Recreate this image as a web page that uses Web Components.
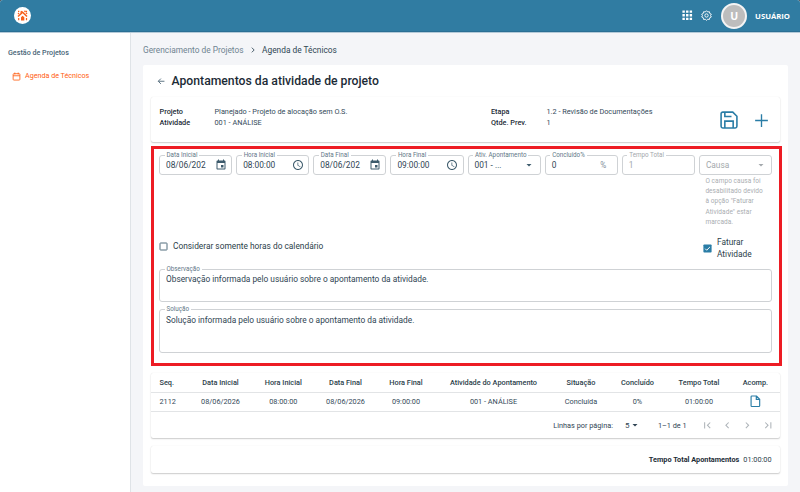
<!DOCTYPE html>
<html lang="pt-BR">
<head>
<meta charset="utf-8">
<title>Agenda de Técnicos</title>
<style>
html, body{
    margin: 0;
    height: 100%;
}
body{
    background: #4a4f54;
    font-family: Roboto, "Liberation Sans", sans-serif;
    font-size: 7.3px;
    color: #2b3e4a;
    overflow: hidden;
}
</style>
</head>
<body>
<app-shell>
    <app-header slot="header" user="USUÁRIO" initial="U"></app-header>
    <side-menu slot="menu" heading="Gestão de Projetos" item="Agenda de Técnicos"></side-menu>
    <bread-crumb slot="path" parent="Gerenciamento de Projetos" current="Agenda de Técnicos"></bread-crumb>
    <page-title>Apontamentos da atividade de projeto</page-title>
    <activity-summary></activity-summary>
    <entry-form></entry-form>
    <entry-table></entry-table>
    <total-card label="Tempo Total Apontamentos" value="01:00:00"></total-card>
</app-shell>

<script>
const icons = {
    apps: '<path fill="currentColor" d="M4 8h4V4H4zm6 12h4v-4h-4zm-6 0h4v-4H4zm0-6h4v-4H4zm6 0h4v-4h-4zm6-10v4h4V4zm-6 4h4V4h-4zm6 6h4v-4h-4zm0 6h4v-4h-4z"/>',
    gear: '<path d="M12 1.5l2.6 2.8 3.8-.5.7 3.8 3.4 1.6-1.7 2.8 1.7 3.3-3.4 1.5-.7 3.8-3.8-.4L12 22.5l-2.6-2.3-3.8.4-.7-3.8L1.5 15.3 3.2 12 1.5 9.2l3.4-1.6.7-3.8 3.8.5z"/><circle cx="12" cy="12" r="3.6"/>',
    calendar: '<rect x="3" y="4.5" width="18" height="17" rx="2"/><path d="M3 10h18M7.5 1.5v5M16.5 1.5v5"/>',
    event: '<path fill="currentColor" stroke="none" d="M17 12h-5v5h5zM16 1v2H8V1H6v2H5c-1.11 0-1.99.9-1.99 2L3 19c0 1.1.89 2 2 2h14c1.1 0 2-.9 2-2V5c0-1.1-.9-2-2-2h-1V1zm3 18H5V8h14z"/>',
    clock: '<path fill="currentColor" stroke="none" d="M11.99 2C6.47 2 2 6.48 2 12s4.47 10 9.99 10C17.52 22 22 17.52 22 12S17.52 2 11.99 2M12 20c-4.42 0-8-3.58-8-8s3.58-8 8-8 8 3.58 8 8-3.58 8-8 8m.5-13H11v6l5.25 3.15.75-1.23-4.5-2.67z"/>',
    arrow: '<path fill="currentColor" stroke="none" d="m7 10 5 5 5-5z"/>',
    back: '<path d="M21 12H4M11 4.5L3.5 12l7.5 7.5"/>',
    chevron: '<path d="M8.5 5l7 7-7 7"/>',
    save: '<path d="M4.5 2.5h12l5 5v12a2 2 0 0 1-2 2h-15a2 2 0 0 1-2-2v-15a2 2 0 0 1 2-2zM7 21.5v-8.2h10v8.2M7 2.5v5.3h8"/>',
    plus: '<path d="M12 3v18M3 12h18"/>',
    file: '<path d="M5.5 2h9l6 6v12.500A1.5 1.5 0 0 1 19 22H5.5A1.5 1.5 0 0 1 4 20.5v-17A1.5 1.5 0 0 1 5.5 2zM14 2v6.5h6.5"/>',
    first: '<path fill="currentColor" stroke="none" d="M18.41 16.59 13.82 12l4.59-4.59L17 6l-6 6 6 6zM6 6h2v12H6z"/>',
    prev: '<path fill="currentColor" stroke="none" d="M15.41 16.59 10.83 12l4.58-4.59L14 6l-6 6 6 6z"/>',
    next: '<path fill="currentColor" stroke="none" d="M8.59 16.59 13.17 12 8.59 7.41 10 6l6 6-6 6z"/>',
    last: '<path fill="currentColor" stroke="none" d="M5.59 7.41 10.18 12l-4.59 4.59L7 18l6-6-6-6zM16 6h2v12h-2z"/>'
};

class UiIcon extends HTMLElement {
    constructor() {
        super();
        this.attachShadow({mode:'open'});
    }

    connectedCallback(){
        this.shadowRoot.innerHTML = `
<style>
:host{ display: block; flex: none; width: var(--size, 12px); height: var(--size, 12px); }
svg{ display: block; width: 100%; height: 100%; }
</style>
<svg viewBox="0 0 24 24" fill="none" stroke="currentColor" stroke-width="${this.getAttribute('stroke') || 0}">${icons[this.getAttribute('name')]}</svg>`;
    }
}

class AppShell extends HTMLElement {
    constructor() {
        super();
        this.attachShadow({mode:'open'});
        this.shadowRoot.innerHTML = `
<style>
:host{
    display: flex;
    flex-direction: column;
    height: 100vh;
    border-radius: 3px 3px 0 0;
    overflow: hidden;
    background: #f4f5f8;
}
.body{ display: flex; flex: 1; min-height: 0; }
.main{ flex: 1; min-width: 0; padding: 0 12px 6px 12px; display: flex; flex-direction: column; }
.card{
    flex: 1;
    box-sizing: border-box;
    background: #fff;
    border-radius: 2px;
    padding: 0 8px;
    min-height: 0;
}
</style>
<slot name="header"></slot>
<div class="body">
    <slot name="menu"></slot>
    <div class="main">
        <slot name="path"></slot>
        <div class="card"><slot></slot></div>
    </div>
</div>`;
    }
}

class AppHeader extends HTMLElement {
    constructor() {
        super();
        this.attachShadow({mode:'open'});
    }

    connectedCallback(){
        this.shadowRoot.innerHTML = `
<style>
:host{
    display: flex;
    align-items: center;
    box-sizing: border-box;
    flex: none;
    height: 33px;
    padding: 0 10px 2px 14px;
    background: #307ca2;
    border-bottom: 1px solid #b4cad8;
    box-shadow: inset 0 -1px 0 #2a6f94;
    color: #fff;
    font-family: "Open Sans", sans-serif;
    font-weight: 700;
}
.logo{ width: 17px; height: 17px; margin-right: auto; }
.gear{ margin: 1px 9px 0 6.5px; }
.avatar{
    display: flex;
    align-items: center;
    justify-content: center;
    box-sizing: border-box;
    width: 26px;
    height: 26px;
    border: 2px solid #f4f4f4;
    border-radius: 50%;
    background: #bdbdbd;
    font-size: 10.5px;
    margin: 2px 8px 0 0;
}
.user{ font-size: 7.7px; margin-top: 1px; }
</style>
<svg class="logo" viewBox="0 0 17 17">
    <circle cx="8.5" cy="8.5" r="8.5" fill="#fff"/>
    <g fill="none" stroke="#f7601c" stroke-width="1.5">
        <path d="M4 9.5l4.6-4.3L13 9.5"/>
        <path d="M6.6 5.6l1.5-1.4M4.1 7l.9-.9M10.5 4.9l1-1M12 6.7l1-1"/>
        <path d="M4.7 11v2.2M12.5 11v2.2" stroke-width="1.2"/>
    </g>
    <path fill="#f7601c" d="M7 13.6v-3.3l1.6-1.5 1.7 1.5v3.3z"/>
    <path fill="#f7601c" d="M4 3.8h1.3v1.3H4zM11.8 3.8h1.3v1.3h-1.3z"/>
</svg>
<ui-icon name="apps" style="--size:14.5px"></ui-icon>
<ui-icon class="gear" name="gear" stroke="2" style="--size:11px"></ui-icon>
<div class="avatar">${this.getAttribute('initial')}</div>
<div class="user">${this.getAttribute('user')}</div>`;
    }
}

class SideMenu extends HTMLElement {
    constructor() {
        super();
        this.attachShadow({mode:'open'});
    }

    connectedCallback(){
        this.shadowRoot.innerHTML = `
<style>
:host{
    display: block;
    box-sizing: border-box;
    flex: none;
    width: 131px;
    padding: 14.5px 8px;
    background: #fff;
    border-right: 1px solid #dfe3e7;
    line-height: 10px;
    font-size: 7.17px;
}
.heading{ font-weight: 500; color: #486577; }
.item{ display: flex; align-items: center; gap: 4px; margin: 13.5px 0 0 4px; color: #ff5c10; }
</style>
<div class="heading">${this.getAttribute('heading')}</div>
<div class="item"><ui-icon name="calendar" stroke="2.2" style="--size:9px"></ui-icon>${this.getAttribute('item')}</div>`;
    }
}

class BreadCrumb extends HTMLElement {
    constructor() {
        super();
        this.attachShadow({mode:'open'});
    }

    connectedCallback(){
        this.shadowRoot.innerHTML = `
<style>
:host{ display: flex; align-items: center; flex: none; height: 32px; padding-top: 2px; box-sizing: border-box; font-size: 8.34px; color: #6f8491; }
ui-icon{ margin: 0 5.5px 0 5px; color: #3c5361; }
.current{ color: #2f4554; }
</style>
<span>${this.getAttribute('parent')}</span>
<ui-icon name="chevron" stroke="2.8" style="--size:8px"></ui-icon>
<span class="current">${this.getAttribute('current')}</span>`;
    }
}

class PageTitle extends HTMLElement {
    constructor() {
        super();
        this.attachShadow({mode:'open'});
        this.shadowRoot.innerHTML = `
<style>
:host{ display: flex; align-items: center; height: 32px; gap: 6px; padding-left: 6px; font-size: 12.21px; font-weight: 500; color: #1c2b36; }
ui-icon{ color: #4a6475; }
</style>
<ui-icon name="back" stroke="2.5" style="--size:8.5px"></ui-icon>
<slot></slot>`;
    }
}

class PaperCard extends HTMLElement {
    constructor() {
        super();
        this.attachShadow({mode:'open'});
        this.shadowRoot.innerHTML = `
<style>
:host{
    display: block;
    box-sizing: border-box;
    background: #fff;
    border-radius: 2px;
    box-shadow: 0 1px 1.5px rgba(0,0,0,0.2), 0 0 1px rgba(0,0,0,0.1);
}
</style>
<slot></slot>`;
    }
}

class ActivitySummary extends HTMLElement {
    constructor() {
        super();
        this.attachShadow({mode:'open'});
        this.shadowRoot.innerHTML = `
<style>
:host{ display: block; margin-bottom: 4px; }
.row{ display: flex; align-items: flex-start; height: 45px; box-sizing: border-box; padding: 8.5px 10.5px 0 8.5px; }
dl{ display: grid; grid-template-columns: 55px 276.5px; grid-auto-rows: 11px; line-height: 11px; margin: 0; }
dl + dl{ grid-template-columns: 55.5px auto; }
dt{ font-weight: 500; color: #1c2b36; }
dd{ margin: 0; color: #344a59; }
.actions{ display: flex; align-items: center; gap: 14px; margin: 4.5px 0 0 auto; color: #2a7da6; }
</style>
<paper-card>
    <div class="row">
        <dl><dt>Projeto</dt><dd>Planejado - Projeto de alocação sem O.S.</dd><dt>Atividade</dt><dd>001 - ANÁLISE</dd></dl>
        <dl><dt>Etapa</dt><dd>1.2 - Revisão de Documentações</dd><dt>Qtde. Prev.</dt><dd>1</dd></dl>
        <div class="actions">
            <ui-icon name="save" stroke="1.9" style="--size:20px"></ui-icon>
            <ui-icon name="plus" stroke="1.9" style="--size:17px"></ui-icon>
        </div>
    </div>
</paper-card>`;
    }
}

class TextField extends HTMLElement {
    constructor() {
        super();
        this.attachShadow({mode:'open'});
    }

    connectedCallback(){
        const label = this.getAttribute('label');
        const icon = this.getAttribute('icon');
        const unit = this.getAttribute('unit');
        this.shadowRoot.innerHTML = `
<style>
:host{ display: block; min-width: 0; }
:host([disabled]){ --ink: #a3a8ac; --label: #a3a8ac; --icon: #a3a8ac; }
fieldset{
    display: flex;
    box-sizing: border-box;
    height: var(--height, 24px);
    margin: 0;
    padding: 0 4.5px 0 5.5px;
    min-width: 0;
    border: 1px solid #cfd2d5;
    border-radius: 3px;
}
legend{
    height: 9px;
    line-height: 9px;
    padding: 0 2px;
    margin-left: -1px;
    font-size: 6.27px;
    color: var(--label, #5f7787);
    white-space: nowrap;
}
.box{
    display: flex;
    align-items: center;
    width: 100%;
    height: 12px;
    margin-top: var(--pull, -1px);
    font-size: 8.34px;
    line-height: 12px;
    color: var(--ink, #2f4453);
}
.value{ flex: 1; min-width: 0; overflow: hidden; white-space: nowrap; padding-left: .5px; }
ui-icon{ color: var(--icon, #3d5b6c); }
.unit{ font-size: 8.2px; color: #7f919d; padding-right: 6px; }
.plain{ padding-top: 3px; height: 20px; margin-top: 4px; }
.plain .box{ margin-top: 0; }
</style>
<fieldset${label ? '' : ' class="plain"'}>
    ${label ? `<legend>${label}</legend>` : ''}
    <div class="box">
        <span class="value"><slot></slot></span>
        ${unit ? `<span class="unit">${unit}</span>` : ''}
        ${icon ? `<ui-icon name="${icon}" style="--size:12px"></ui-icon>` : ''}
    </div>
</fieldset>`;
    }
}

class CheckOption extends HTMLElement {
    constructor() {
        super();
        this.attachShadow({mode:'open'});
    }

    connectedCallback(){
        const mark = this.hasAttribute('checked')
            ? '<rect x=".4" y=".4" width="8.2" height="8.2" rx=".8" fill="#2a7da6"/><path d="M2.2 4.7l1.5 1.5L6.9 3" fill="none" stroke="#fff" stroke-width="1"/>'
            : '<rect x="1" y="1" width="7" height="7" rx=".5" fill="none" stroke="#506c7c" stroke-width="1"/>';
        this.shadowRoot.innerHTML = `
<style>
:host{ display: flex; align-items: center; gap: 5px; font-size: 8.35px; line-height: 12.4px; color: #2b3e4a; }
svg{ flex: none; width: 9px; height: 9px; }
</style>
<svg viewBox="0 0 9 9">${mark}</svg>
<slot></slot>`;
    }
}

class EntryForm extends HTMLElement {
    constructor() {
        super();
        this.attachShadow({mode:'open'});
        this.shadowRoot.innerHTML = `
<style>
:host{
    display: block;
    box-sizing: border-box;
    height: 220px;
    border: 3px solid #ed1c24;
    margin: 0 -2px 7px 0;
    padding: 2px 7px 0 5px;
}
.fields{ display: grid; grid-template-columns: repeat(8, 1fr); gap: 4px; height: 84px; }
.help{ margin: 1px 0 0 6.5px; font-size: 6.5px; line-height: 10.2px; letter-spacing: .01em; color: #a9adb1; white-space: nowrap; }
.options{ display: flex; align-items: center; justify-content: space-between; height: 30px; }
.options check-option:first-child{ margin-top: -8px; }
.options check-option:last-child{ width: 69px; margin-top: -4px; }
.note{ --height: 36.5px; --pull: -1.5px; }
.solution{ --height: 47.5px; --pull: -.5px; margin-top: 3.5px; }
</style>
<div class="fields">
    <text-field label="Data Inicial" icon="event">08/06/202</text-field>
    <text-field label="Hora Inicial" icon="clock">08:00:00</text-field>
    <text-field label="Data Final" icon="event">08/06/202</text-field>
    <text-field label="Hora Final" icon="clock">09:00:00</text-field>
    <text-field label="Ativ. Apontamento" icon="arrow">001 - ...</text-field>
    <text-field label="Concluído%" unit="%">0</text-field>
    <text-field label="Tempo Total" disabled>1</text-field>
    <div>
        <text-field icon="arrow" disabled>Causa</text-field>
        <div class="help">O campo causa foi<br>desabilitado devido<br>à opção "Faturar<br>Atividade" estar<br>marcada.</div>
    </div>
</div>
<div class="options">
    <check-option>Considerar somente horas do calendário</check-option>
    <check-option checked>Faturar<br>Atividade</check-option>
</div>
<text-field class="note" label="Observação">Observação informada pelo usuário sobre o apontamento da atividade.</text-field>
<text-field class="note solution" label="Solução">Solução informada pelo usuário sobre o apontamento da atividade.</text-field>`;
    }
}

const columns = ['Seq.', 'Data Inicial', 'Hora Inicial', 'Data Final', 'Hora Final', 'Atividade do Apontamento', 'Situação', 'Concluído', 'Tempo Total', 'Acomp.'];
const rows = [
    ['2112', '08/06/2026', '08:00:00', '08/06/2026', '09:00:00', '001 - ANÁLISE', 'Concluída', '0%', '01:00:00']
];

class EntryTable extends HTMLElement {
    constructor() {
        super();
        this.attachShadow({mode:'open'});
        this.shadowRoot.innerHTML = `
<style>
:host{ display: block; margin-bottom: 8px; }
.row{
    display: grid;
    grid-template-columns: 38px 63px 62.6px 61.8px 59.2px 115.8px 59.2px 53.8px 69.2px 43.8px;
    align-items: center;
    justify-items: center;
    height: 19px;
    box-sizing: border-box;
    border-bottom: 1px solid #e2e4e6;
    white-space: nowrap;
    color: #344a59;
}
.row > :first-child{ justify-self: start; padding-left: 8.5px; }
.head{ font-weight: 500; font-size: 7.33px; color: #2b3e4a; height: 20px; }
.data{ padding-bottom: 1px; }
.row ui-icon{ color: #2a7da6; }
.pager{ display: flex; align-items: center; height: 26px; padding-right: 6px; justify-content: flex-end; color: #2f4453; }
.size{ display: flex; align-items: center; margin: 0 16.5px 0 12px; font-size: 8px; }
.nav{ display: flex; gap: 7.8px; margin-left: 14px; color: #adb3b8; }
</style>
<paper-card>
    <div class="row head">${columns.map(c => `<span>${c}</span>`).join('')}</div>
    ${rows.map(r => `<div class="row data">${r.map(c => `<span>${c}</span>`).join('')}<ui-icon name="file" stroke="2.2" style="--size:12.5px"></ui-icon></div>`).join('')}
    <div class="pager">
        <span>Linhas por página:</span>
        <span class="size">5<ui-icon name="arrow" style="--size:12px"></ui-icon></span>
        <span>1–1 de 1</span>
        <span class="nav">
            ${['first', 'prev', 'next', 'last'].map(n => `<ui-icon name="${n}" style="--size:12.5px"></ui-icon>`).join('')}
        </span>
    </div>
</paper-card>`;
    }
}

class TotalCard extends HTMLElement {
    constructor() {
        super();
        this.attachShadow({mode:'open'});
    }

    connectedCallback(){
        this.shadowRoot.innerHTML = `
<style>
:host{ display: block; }
.total{ display: flex; align-items: center; justify-content: flex-end; gap: 4px; height: 27px; padding-right: 8.5px; }
b{ font-weight: 700; color: #1c2b36; }
</style>
<paper-card>
    <div class="total"><b>${this.getAttribute('label')}</b><span>${this.getAttribute('value')}</span></div>
</paper-card>`;
    }
}

customElements.define('ui-icon', UiIcon);
customElements.define('paper-card', PaperCard);
customElements.define('text-field', TextField);
customElements.define('check-option', CheckOption);
customElements.define('app-shell', AppShell);
customElements.define('app-header', AppHeader);
customElements.define('side-menu', SideMenu);
customElements.define('bread-crumb', BreadCrumb);
customElements.define('page-title', PageTitle);
customElements.define('activity-summary', ActivitySummary);
customElements.define('entry-form', EntryForm);
customElements.define('entry-table', EntryTable);
customElements.define('total-card', TotalCard);
</script>
</body>
</html>
